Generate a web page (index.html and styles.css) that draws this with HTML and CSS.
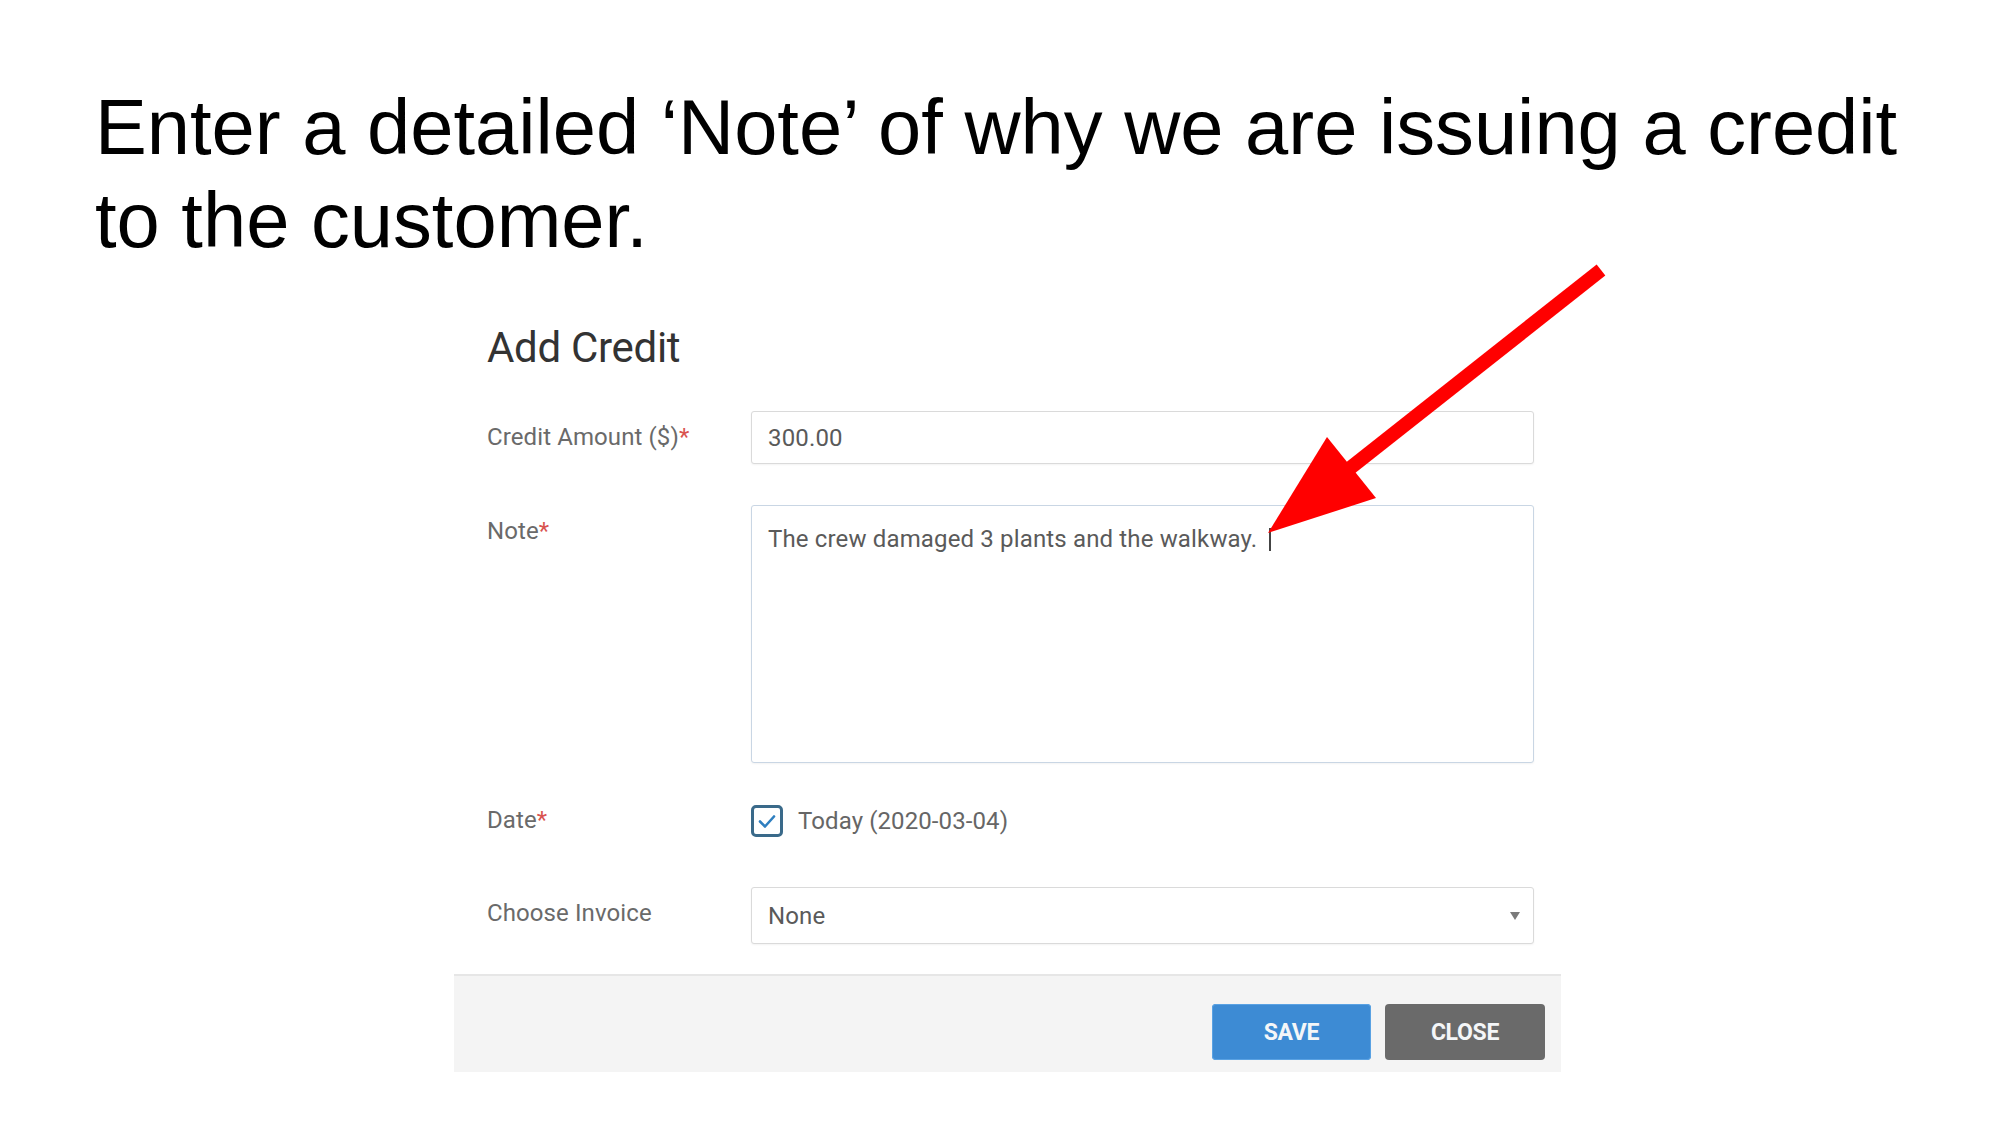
FILE: index.html
```html
<!DOCTYPE html>
<html lang="en">
<head>
<meta charset="utf-8">
<title>Add Credit</title>
<link rel="stylesheet" href="styles.css">
</head>
<body>
<div class="slide">
  <h1 class="headline">Enter a detailed ‘Note’ of why we are issuing a credit to the customer.</h1>

  <div class="dialog">
    <div class="dialog-body">
      <h2 class="dialog-title">Add Credit</h2>

      <div class="row row-amount">
        <div class="label">Credit Amount ($)<span class="req">*</span></div>
        <div class="field">300.00</div>
      </div>

      <div class="row row-note">
        <div class="label">Note<span class="req">*</span></div>
        <div class="field field-area">The crew damaged 3 plants and the walkway. <span class="caret"></span></div>
      </div>

      <div class="row row-date">
        <div class="label">Date<span class="req">*</span></div>
        <div class="control-date">
          <span class="checkbox">
            <svg viewBox="0 0 26 26" width="26" height="26"><path d="M6 13.5 L11 18.5 L20 8.5" fill="none" stroke="#2f7fc0" stroke-width="2.6" stroke-linecap="round" stroke-linejoin="round"/></svg>
          </span>
          <span class="date-text">Today (2020-03-04)</span>
        </div>
      </div>

      <div class="row row-invoice">
        <div class="label">Choose Invoice</div>
        <div class="field field-select">
          <span>None</span>
          <svg class="select-arrow" viewBox="0 0 10 8" width="10" height="8"><path d="M0 0 H10 L5 8 Z" fill="#7a7a7a"/></svg>
        </div>
      </div>
    </div>

    <div class="dialog-footer">
      <button class="btn btn-save">SAVE</button>
      <button class="btn btn-close">CLOSE</button>
    </div>
  </div>

  <svg class="arrow" viewBox="0 0 2000 1125" width="2000" height="1125">
    <line x1="1601" y1="270" x2="1335" y2="480" stroke="#ff0000" stroke-width="14"/>
    <polygon points="1268,533 1327,437 1376,498" fill="#ff0000"/>
  </svg>
</div>
</body>
</html>
```

FILE: styles.css
```css
html, body {
  margin: 0;
  padding: 0;
  background: #ffffff;
}

.slide {
  position: relative;
  width: 2000px;
  height: 1125px;
  overflow: hidden;
  background: #ffffff;
}

.headline {
  margin: 0;
  padding: 81px 0 0 95px;
  width: 1870px;
  font-family: "Liberation Sans", Arial, sans-serif;
  font-weight: 400;
  font-size: 77.7px;
  line-height: 93px;
  color: #000000;
}

.dialog {
  margin: 56px 0 0 454px;
  width: 1107px;
  font-family: Roboto, "Noto Sans", sans-serif;
}

.dialog-body {
  padding: 0 27px 30px 33px;
}

.dialog-title {
  margin: 0 0 38px;
  font-weight: 400;
  font-size: 42px;
  line-height: 50px;
  color: #333333;
  letter-spacing: -0.3px;
}

.row {
  display: flex;
  align-items: flex-start;
}

.label {
  width: 264px;
  flex: none;
  padding-top: 12px;
  font-size: 24px;
  line-height: 28px;
  color: #6a6a6a;
  letter-spacing: 0.1px;
}

.req {
  color: #d9534f;
}

.field {
  flex: 1;
  box-sizing: border-box;
  height: 53px;
  padding: 12px 16px;
  border: 1px solid #dadada;
  border-radius: 3px;
  box-shadow: 0 1px 2px rgba(0, 0, 0, 0.05);
  font-size: 24px;
  line-height: 28px;
  color: #5a5a5a;
  letter-spacing: 0.15px;
  background: #ffffff;
}

.row-note {
  margin-top: 41px;
}

.field-area {
  height: 258px;
  padding: 19px 16px;
  border-color: #c9d6e4;
}

.caret {
  display: inline-block;
  width: 0;
  height: 23px;
  margin-left: 6px;
  border-left: 2px solid #444444;
  vertical-align: -4px;
}

.row-date {
  margin-top: 31px;
}

.control-date {
  flex: 1;
  height: 53px;
  display: flex;
  align-items: center;
  gap: 15px;
}

.checkbox {
  box-sizing: border-box;
  width: 32px;
  height: 32px;
  border: 3px solid #3a6a8a;
  border-radius: 5px;
  display: flex;
  align-items: center;
  justify-content: center;
  background: #ffffff;
}

.date-text {
  font-size: 24px;
  line-height: 28px;
  color: #666666;
  letter-spacing: 0.1px;
}

.row-invoice {
  margin-top: 40px;
}

.field-select {
  height: 57px;
  padding: 14px 16px;
  display: flex;
  justify-content: space-between;
  align-items: center;
}

.select-arrow {
  margin-right: -3px;
}

.dialog-footer {
  display: flex;
  justify-content: flex-end;
  gap: 14px;
  padding: 28px 16px 12px 0;
  background: #f4f4f4;
  border-top: 2px solid #e6e6e6;
}

.btn {
  height: 56px;
  border: none;
  border-radius: 4px;
  font-family: Roboto, "Noto Sans", sans-serif;
  font-weight: 700;
  font-size: 23px;
  color: #f4f6f8;
  letter-spacing: -0.3px;
  padding: 0;
}

.btn-save {
  width: 159px;
  background: #3d8bd4;
  box-shadow: inset 0 0 0 1px #5aa2e3;
}

.btn-close {
  width: 160px;
  background: #6a6a6a;
}

.arrow {
  position: absolute;
  left: 0;
  top: 0;
  pointer-events: none;
}
```
